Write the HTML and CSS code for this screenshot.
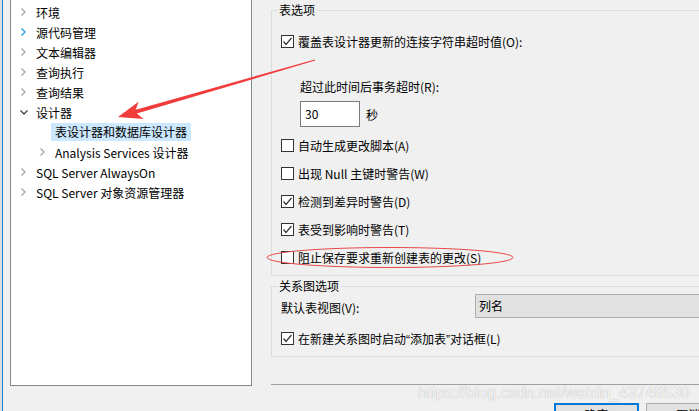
FILE: index.html
```html
<!DOCTYPE html>
<html lang="zh-CN">
<head>
  <meta charset="UTF-8">
  <meta name="viewport" content="width=device-width, initial-scale=1.0">
  <title>选项 - 设计器</title>
  <link rel="stylesheet" href="styles.css">
</head>
<body>
  <div class="window">
    <aside class="side">
      <div class="edge"></div>
      <ul class="tree">
        <li class="node"><span class="chev"><svg width="5" height="8" viewBox="0 0 5 8"><path d="M0.5 0.5 L4 4 L0.5 7.5"/></svg></span><span class="label">环境</span></li>
        <li class="node hover"><span class="chev"><svg width="5" height="8" viewBox="0 0 5 8"><path d="M0.5 0.5 L4 4 L0.5 7.5"/></svg></span><span class="label">源代码管理</span></li>
        <li class="node"><span class="chev"><svg width="5" height="8" viewBox="0 0 5 8"><path d="M0.5 0.5 L4 4 L0.5 7.5"/></svg></span><span class="label">文本编辑器</span></li>
        <li class="node"><span class="chev"><svg width="5" height="8" viewBox="0 0 5 8"><path d="M0.5 0.5 L4 4 L0.5 7.5"/></svg></span><span class="label">查询执行</span></li>
        <li class="node"><span class="chev"><svg width="5" height="8" viewBox="0 0 5 8"><path d="M0.5 0.5 L4 4 L0.5 7.5"/></svg></span><span class="label">查询结果</span></li>
        <li class="node open"><span class="chev"><svg width="8" height="5" viewBox="0 0 8 5"><path d="M0.5 0.5 L4 4 L7.5 0.5"/></svg></span><span class="label">设计器</span></li>
        <li class="node child"><span class="chev"></span><span class="label selected">表设计器和数据库设计器</span></li>
        <li class="node child"><span class="chev"><svg width="5" height="8" viewBox="0 0 5 8"><path d="M0.5 0.5 L4 4 L0.5 7.5"/></svg></span><span class="label">Analysis Services 设计器</span></li>
        <li class="node"><span class="chev"><svg width="5" height="8" viewBox="0 0 5 8"><path d="M0.5 0.5 L4 4 L0.5 7.5"/></svg></span><span class="label">SQL Server AlwaysOn</span></li>
        <li class="node"><span class="chev"><svg width="5" height="8" viewBox="0 0 5 8"><path d="M0.5 0.5 L4 4 L0.5 7.5"/></svg></span><span class="label">SQL Server 对象资源管理器</span></li>
      </ul>
    </aside>

    <main class="options">
      <fieldset class="group table-group">
        <legend>表选项</legend>
        <label class="check first">
          <span class="box"><svg width="11" height="11" viewBox="0 0 11 11"><path d="M1.5 5.5 L4 8.5 L9.5 2"/></svg></span>
          覆盖表设计器更新的连接字符串超时值(O):
        </label>
        <div class="field-label">超过此时间后事务超时(R):</div>
        <div class="spin-row">
          <span class="text-input">30</span>
          <span class="unit">秒</span>
        </div>
        <label class="check"><span class="box"></span>自动生成更改脚本(A)</label>
        <label class="check"><span class="box"></span>出现 Null 主键时警告(W)</label>
        <label class="check">
          <span class="box"><svg width="11" height="11" viewBox="0 0 11 11"><path d="M1.5 5.5 L4 8.5 L9.5 2"/></svg></span>
          检测到差异时警告(D)
        </label>
        <label class="check">
          <span class="box"><svg width="11" height="11" viewBox="0 0 11 11"><path d="M1.5 5.5 L4 8.5 L9.5 2"/></svg></span>
          表受到影响时警告(T)
        </label>
        <label class="check"><span class="box"></span>阻止保存要求重新创建表的更改(S)</label>
      </fieldset>

      <fieldset class="group diagram-group">
        <legend>关系图选项</legend>
        <div class="combo-row">
          <span class="combo-label">默认表视图(V):</span>
          <span class="combo">列名</span>
        </div>
        <label class="check">
          <span class="box"><svg width="11" height="11" viewBox="0 0 11 11"><path d="M1.5 5.5 L4 8.5 L9.5 2"/></svg></span>
          <span>在新建关系图时启动<span class="quote">“</span>添加表<span class="quote">”</span>对话框(L)</span>
        </label>
      </fieldset>

      <div class="separator"></div>

      <div class="buttons">
        <button class="btn default">确定</button>
        <button class="btn">取消</button>
      </div>
    </main>

    <!-- red annotations drawn over the screenshot -->
    <svg class="marks" width="699" height="411" viewBox="0 0 699 411">
      <polygon points="118,117 143.6,118.9 136.8,113.6 315.1,60.6 314.9,59.4 135.7,109.8 138.6,101.7" fill="#f23b3b"/>
      <ellipse cx="390" cy="257.5" rx="123" ry="10" fill="none" stroke="#e8484a" stroke-width="1"/>
    </svg>

    <div class="watermark">https://blog.csdn.net/weixin_43748530</div>
  </div>
</body>
</html>
```

FILE: styles.css
```css
body {
  margin: 0;
  background-color: #f0f0f0;
  font-family: "Microsoft YaHei", "Noto Sans CJK SC", sans-serif;
  font-size: 12px;
  color: #000;
}

.window {
  position: relative;
  display: flex;
  width: 699px;
  height: 411px;
  overflow: hidden;
}

/* left side: options tree */
.side {
  display: flex;
  flex: none;
  width: 252px;
}

.edge {
  width: 2px;
  background-color: #dcdcdc;
  border-right: 1px solid #1883d7;
  margin-right: 7px;
}

.tree {
  list-style: none;
  margin: 0;
  padding: 2px 0 0 10px;
  box-sizing: border-box;
  width: 242px;
  height: 386px;
  background: #fff;
  border: 1px solid #828790;
  border-top: none;
}

.node {
  display: flex;
  align-items: center;
  height: 20px;
  white-space: nowrap;
}

.node.child {
  padding-left: 19px;
}

.chev {
  display: flex;
  align-items: center;
  width: 15px;
  height: 20px;
  flex: none;
}

.chev svg {
  fill: none;
  stroke: #a5a5a5;
  stroke-width: 1.3;
}

.node.hover .chev svg {
  stroke: #1ca0e2;
}

.node.open .chev svg {
  margin-left: -1px;
  stroke: #404040;
}

.label.selected {
  margin-left: -4px;
  padding: 0 4px;
  line-height: 18px;
  background-color: #cce8ff;
}

/* right side: option groups */
.options {
  flex: none;
  width: 460px;
  margin-left: 19px;
}

.group {
  margin: 2px 0 0 0;
  padding: 0 0 8px 0;
  border: 1px solid #dcdcdc;
  min-width: 0;
}

.group legend {
  margin-left: 5px;
  padding: 0 2px;
  line-height: 16px;
}

.check {
  display: flex;
  align-items: center;
  gap: 4px;
  height: 20px;
  margin: 8px 0 0 9px;
  white-space: nowrap;
}

.check.first {
  margin-top: 13px;
}

.quote {
  font-family: "Liberation Sans", Arial, sans-serif;
}

.box {
  display: flex;
  align-items: center;
  justify-content: center;
  width: 13px;
  height: 13px;
  box-sizing: border-box;
  border: 1px solid #333;
  background: #fff;
  flex: none;
}

.box svg {
  fill: none;
  stroke: #333;
  stroke-width: 1.2;
}

.field-label {
  height: 20px;
  line-height: 20px;
  margin: 26px 0 0 28px;
}

.spin-row {
  display: flex;
  align-items: center;
  gap: 6px;
  margin: 4px 0 0 28px;
}

.text-input {
  width: 60px;
  height: 26px;
  box-sizing: border-box;
  padding-left: 4px;
  line-height: 24px;
  border: 1px solid #7a7a7a;
  background: #fff;
}

.combo-row {
  display: flex;
  align-items: center;
  height: 24px;
  margin-left: 9px;
}

.combo-label {
  width: 194px;
  padding-top: 3px;
  flex: none;
}

.combo {
  flex: 1;
  height: 24px;
  box-sizing: border-box;
  padding-left: 3px;
  line-height: 22px;
  background: #e1e1e1;
  border: 1px solid #adadad;
}

.diagram-group .check {
  margin-top: 10px;
}

.separator {
  height: 1px;
  margin-top: 27px;
  background-color: #a0a0a0;
}

.buttons {
  display: flex;
  gap: 7px;
  margin: 18px 0 0 283px;
}

.btn {
  width: 85px;
  height: 23px;
  padding: 0;
  font: inherit;
  background: #e1e1e1;
  border: 1px solid #adadad;
}

.btn.default {
  border: 2px solid #0078d7;
}

/* overlays */
.marks {
  position: absolute;
  top: 0;
  left: 0;
  pointer-events: none;
}

.watermark {
  position: absolute;
  left: 418px;
  top: 384px;
  font-family: "Liberation Sans", Arial, sans-serif;
  font-size: 16px;
  line-height: 18px;
  color: rgba(255, 255, 255, 0.9);
  text-shadow: 0 0 1px rgba(0, 0, 0, 0.35);
  white-space: nowrap;
}
```
